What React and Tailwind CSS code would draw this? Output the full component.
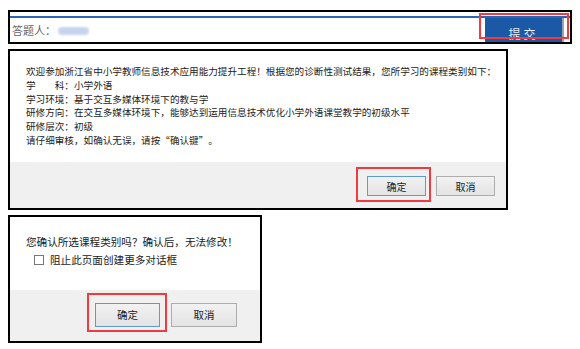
import React from "react";

const cjk = {
  fontFamily: '"Noto Sans CJK SC", "Noto Sans", sans-serif',
  textSpacingTrim: "space-all",
};

function DialogButton({ label, focused, marked, className }) {
  return (
    <div className="relative">
      <button
        type="button"
        className={`flex items-center justify-center border bg-gradient-to-b from-[#f2f2f2] to-[#e3e3e3] text-[#222] ${
          focused ? "border-[#5a9bd8]" : "border-[#adadad]"
        } ${className}`}
      >
        {label}
      </button>
      {marked && (
        <div className="pointer-events-none absolute border-2 border-[#ef3b3f]" style={marked} />
      )}
    </div>
  );
}

export default function App() {
  const lines = [
    "欢迎参加浙江省中小学教师信息技术应用能力提升工程！根据您的诊断性测试结果，您所学习的课程类别如下：",
    "学　　科：小学外语",
    "学习环境：基于交互多媒体环境下的教与学",
    "研修方向：在交互多媒体环境下，能够达到运用信息技术优化小学外语课堂教学的初级水平",
    "研修层次：初级",
    "请仔细审核，如确认无误，请按“确认键”。",
  ];

  return (
    <div className="w-[580px] h-[349px] bg-white pt-[10px] pl-[8px] flex flex-col" style={cjk}>
      {/* header strip */}
      <div className="relative w-[564px] h-[34px] border-2 border-black pt-[4px] overflow-hidden">
        <div className="h-[1.5px] bg-[#2a66b8]" />
        <div className="flex items-start justify-between pl-[2px] pr-[6px]">
          <div className="flex items-center h-[26px] text-[11px] text-[#666]">
            <span>答题人：</span>
            <span className="ml-[2px] h-[8px] w-[31px] rounded-full bg-[#c4d4ee] blur-[1px]" />
          </div>
          <div className="w-[79px] h-[28px] mt-[0.5px] bg-[#1b58a6] border-r-2 border-[#9aa3ad] flex items-center justify-center pt-[4px] text-[12px] text-[#e8eef8] tracking-[3px]">
            提交
          </div>
        </div>
        <div className="pointer-events-none absolute left-[469px] top-[1px] w-[90px] h-[26px] border-2 border-[#ef3b3f]" />
      </div>

      {/* course info dialog */}
      <div className="mt-[5px] w-[500px] h-[161px] border-2 border-black flex flex-col">
        <div className="flex-1 pl-[16px] pt-[14px] text-[9.6px] leading-[13.8px] text-[#222]">
          {lines.map((l, i) => (
            <div key={i} className="whitespace-nowrap">
              {l}
            </div>
          ))}
        </div>
        <div className="h-[46px] bg-[#f0f0f0] flex items-start justify-end gap-[10px] pt-[14px] pr-[11px] text-[10px]">
          <DialogButton
            label="确定"
            focused
            className="w-[59px] h-[20px]"
            marked={{ left: -11, top: -9, width: 75, height: 35 }}
          />
          <DialogButton label="取消" className="w-[59px] h-[20px]" />
        </div>
      </div>

      {/* confirm dialog */}
      <div className="mt-[5px] w-[254px] h-[128px] border-2 border-black flex flex-col">
        <div className="flex-1 pl-[16px] pt-[18px] text-[10.6px] text-[#222]">
          <div className="leading-[14px] whitespace-nowrap">您确认所选课程类别吗？确认后，无法修改！</div>
          <div className="mt-[4px] flex items-center pl-[8px]">
            <span className="w-[10px] h-[10px] border border-[#777] bg-white" />
            <span className="ml-[6px] leading-[14px]">阻止此页面创建更多对话框</span>
          </div>
        </div>
        <div className="h-[51px] bg-[#f0f0f0] flex items-start justify-end gap-[11px] pt-[13px] pr-[23px] text-[10.5px]">
          <DialogButton
            label="确定"
            focused
            className="w-[65px] h-[24px]"
            marked={{ left: -8, top: -10, width: 80, height: 39 }}
          />
          <DialogButton label="取消" className="w-[66px] h-[24px]" />
        </div>
      </div>
    </div>
  );
}
